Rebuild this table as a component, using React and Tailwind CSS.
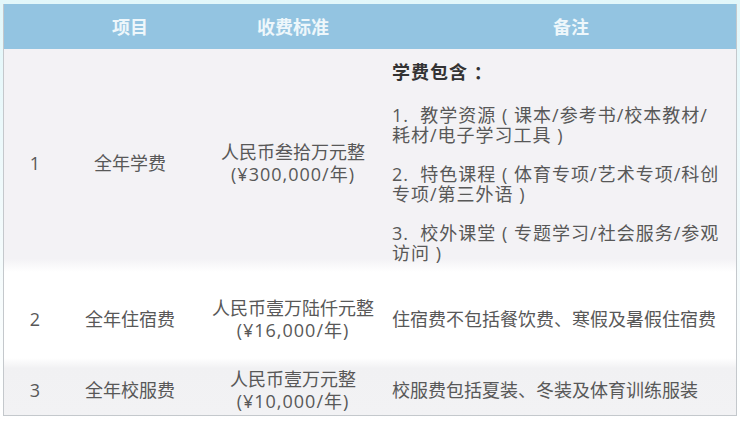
import React from "react";

const font = { fontFamily: '"Open Sans","Noto Sans CJK SC",sans-serif' };

export default function App() {
  return (
    <div
      className="w-[740px] h-[421px] bg-[linear-gradient(to_bottom,#e2f7fa,#f4fbfc_60%,#ffffff)] pt-[4px] pl-[3px] pr-[3px] text-[18px] text-[#585858] overflow-hidden"
      style={font}
    >
      <div className="border-l border-r border-b border-[#c4c8cc] bg-white">
        {/* header */}
        <div className="grid grid-cols-[62px_128px_198px_1fr] h-[45px] bg-[#93c4e1] text-[#eef7fb] font-bold items-center leading-[20px]">
          <div />
          <div className="text-center">项目</div>
          <div className="text-center">收费标准</div>
          <div className="text-center pl-[14px]">备注</div>
        </div>

        {/* row 1 */}
        <div className="grid grid-cols-[62px_128px_198px_1fr] bg-[linear-gradient(to_bottom,#f3f2f5_0%,#f3f2f5_94%,#ffffff_100%)] leading-[20px]">
          <div className="flex items-center justify-center pt-[5px]">1</div>
          <div className="flex items-center justify-center pt-[5px]">全年学费</div>
          <div className="flex flex-col items-center justify-center pt-[5px] leading-[22px]">
            <div>人民币叁拾万元整</div>
            <div className="tracking-[1px]">(¥300,000/年)</div>
          </div>
          <div className="pt-[13px] pb-[9px] flex flex-col gap-[19px] tracking-[1px]">
            <div className="font-bold text-[#333] mb-[4px]">学费包含 ：</div>
            <div>
              1.&nbsp; 教学资源{"\u00a0(\u00a0"}课本/参考书/校本教材/
              <br />
              耗材/电子学习工具{"\u00a0)"}
            </div>
            <div>
              2.&nbsp; 特色课程{"\u00a0(\u00a0"}体育专项/艺术专项/科创
              <br />
              专项/第三外语{"\u00a0)"}
            </div>
            <div>
              3.&nbsp; 校外课堂{"\u00a0(\u00a0"}专题学习/社会服务/参观
              <br />
              访问{"\u00a0)"}
            </div>
          </div>
        </div>

        {/* row 2 */}
        <div className="grid grid-cols-[62px_128px_198px_1fr] h-[86px] pt-[8px] bg-white leading-[22px] items-center">
          <div className="text-center">2</div>
          <div className="text-center">全年住宿费</div>
          <div className="flex flex-col items-center">
            <div>人民币壹万陆仟元整</div>
            <div className="tracking-[1px]">(¥16,000/年)</div>
          </div>
          <div>住宿费不包括餐饮费、寒假及暑假住宿费</div>
        </div>

        {/* row 3 */}
        <div className="grid grid-cols-[62px_128px_198px_1fr] h-[57px] pt-[6px] bg-[linear-gradient(to_bottom,#ffffff_0%,#f1f1f3_18%,#f2f2f4_100%)] leading-[22px] items-center">
          <div className="text-center">3</div>
          <div className="text-center">全年校服费</div>
          <div className="flex flex-col items-center">
            <div>人民币壹万元整</div>
            <div className="tracking-[1px]">(¥10,000/年)</div>
          </div>
          <div>校服费包括夏装、冬装及体育训练服装</div>
        </div>
      </div>
    </div>
  );
}
